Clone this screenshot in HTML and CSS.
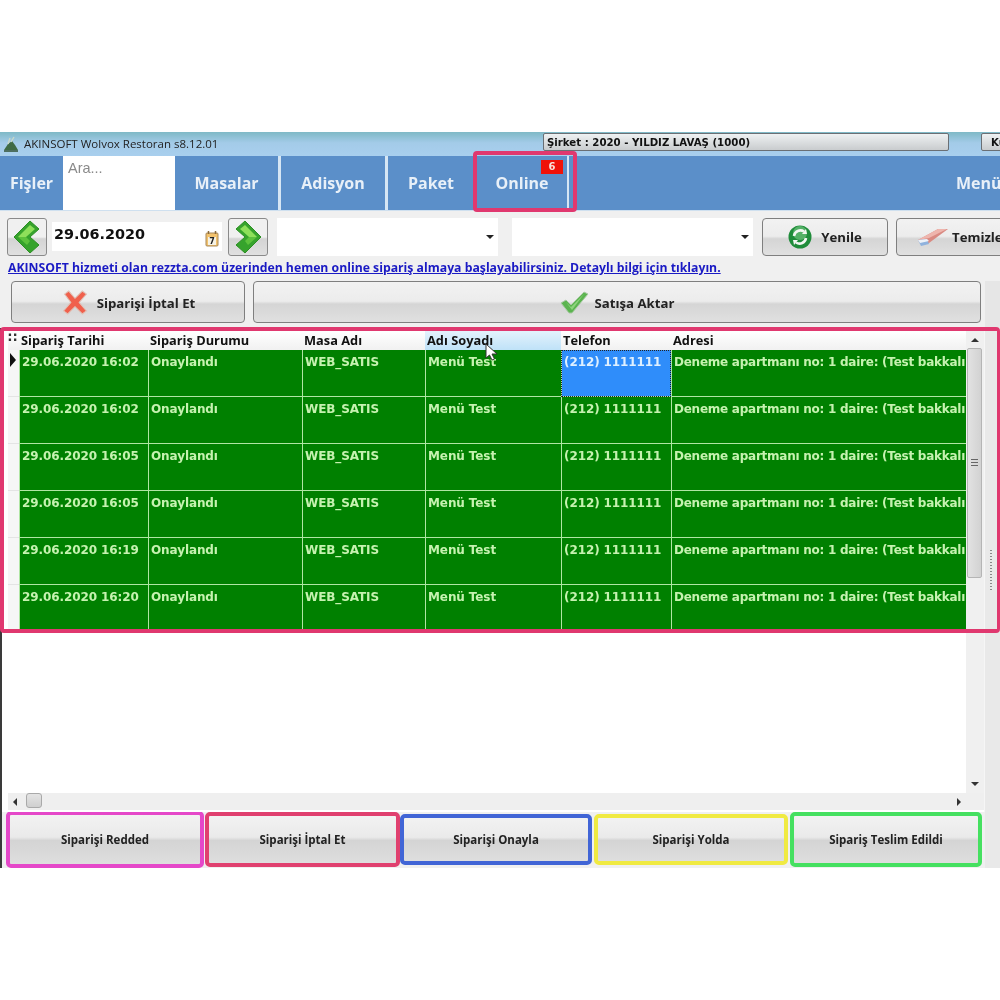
FILE: index.html
```html
<!DOCTYPE html>
<html lang="tr">
<head>
<meta charset="utf-8">
<title>AKINSOFT Wolvox Restoran</title>
<link rel="stylesheet" href="styles.css">
</head>
<body>
<div class="app">
  <header class="titlebar">
    <svg class="appicon" width="16" height="16" viewBox="0 0 16 16"><path d="M1 14 L5 8 L9 5 L12 9 L15 14 Z" fill="#3f6b45"/><path d="M5 8 L7 2 M8 6 L11 1" stroke="#c9d8c8" stroke-width="1.4"/><path d="M1 15 H15" stroke="#2f4f33" stroke-width="1.5"/></svg>
    <span class="apptitle">AKINSOFT Wolvox Restoran s8.12.01</span>
    <span class="company">Şirket : 2020 - YILDIZ LAVAŞ (1000)</span>
    <span class="user">Ku</span>
  </header>

  <nav class="tabs">
    <span class="tab t-fisler">Fişler</span>
    <span class="search">Ara...</span>
    <span class="tab t-masalar">Masalar</span>
    <span class="tab t-adisyon">Adisyon</span>
    <span class="tab t-paket">Paket</span>
    <span class="tab t-online">Online<span class="badge">6</span></span>
    <span class="tab-menu">Menü</span>
  </nav>

  <section class="toolbar">
    <button class="navbtn"><svg width="32" height="34" viewBox="0 0 32 34"><path d="M3 17 L19 1 L28 9 L19 17 L28 25 L19 33 Z" fill="#36a32c" stroke="#2c8f24" stroke-linejoin="round"/><path d="M7 17 L19 5 L24 9 L15 17 Z" fill="#8ee05a"/><path d="M7 17 L15 17 L19 21 L16 25 Z" fill="#5cc23c"/></svg></button>
    <div class="datebox"><span>29.06.2020</span>
      <svg class="cal" width="14" height="17" viewBox="0 0 14 17"><rect x="1" y="3" width="12" height="13" rx="1" fill="#f2c26d" stroke="#a9895a"/><rect x="3" y="7" width="8" height="8" fill="#f6f3e6"/><path d="M3.500 1 V4 M10.500 1 V4" stroke="#8a6b3c" stroke-width="1.500"/><text x="7" y="14" text-anchor="middle" class="caltext">7</text></svg>
    </div>
    <button class="navbtn"><svg width="32" height="34" viewBox="0 0 32 34"><path d="M29 17 L13 1 L4 9 L13 17 L4 25 L13 33 Z" fill="#36a32c" stroke="#2c8f24" stroke-linejoin="round"/><path d="M25 17 L13 5 L8 9 L17 17 Z" fill="#8ee05a"/><path d="M25 17 L17 17 L13 21 L16 25 Z" fill="#5cc23c"/></svg></button>
    <div class="combo c1"><i class="caret"></i></div>
    <div class="combo c2"><i class="caret"></i></div>
    <button class="btn b-yenile"><svg width="24" height="24" viewBox="0 0 24 24"><circle cx="12" cy="12" r="11.500" fill="#1f8c3a"/><circle cx="12" cy="8" r="7" fill="#7fcf8a" opacity=".55"/><path d="M6 11 A6.500 6.500 0 0 1 16 6.500 M18 13 A6.500 6.500 0 0 1 8 17.500" fill="none" stroke="#f2f7f2" stroke-width="2.600"/><path d="M14 9 L19 9 L18 4 Z M10 15 L5 15 L6 20 Z" fill="#f2f7f2"/></svg>Yenile</button>
    <button class="btn b-temizle"><svg width="32" height="22" viewBox="0 0 32 22"><path d="M1 14 L21 3 L31 3 L12 17 L4 18 Z" fill="#d98a82"/><path d="M1 14 L12 12 L30 3 L21 3 Z" fill="#eeb5ad"/><path d="M1 14 L10 13 L12 18 L4 20 Z" fill="#8fb2dd"/><path d="M1 14 L10 13 L12 15 L3 17 Z" fill="#eef2f8"/></svg>Temizle</button>
  </section>

  <a class="infolink" href="#">AKINSOFT hizmeti olan rezzta.com üzerinden hemen online sipariş almaya başlayabilirsiniz. Detaylı bilgi için tıklayın.</a>

  <section class="actions">
    <button class="btn a-iptal"><svg width="28" height="25" viewBox="0 0 26 24"><path d="M3 4 L7 1 L13 8 L20 1 L24 4 L17 12 L24 20 L20 23 L13 16 L6 23 L2 20 L9 12 Z" fill="#f0604c" stroke="#e0c2b8"/></svg>Siparişi İptal Et</button>
    <button class="btn a-aktar"><svg width="29" height="23" viewBox="0 0 29 23"><path d="M1 12 L6 9 L11 14 L24 1 L28 3 L12 22 L9 22 Z" fill="#5bb44f" stroke="#a9c9a4"/><path d="M6 11 L11 16 L24 3 L12 19 Z" fill="#8ed47d"/></svg>Satışa Aktar</button>
  </section>

  <section class="gridwrap">
    <div class="grid">
      <div class="ghead">
        <span class="gh-corner">∷</span><span class="gh">Sipariş Tarihi</span><span class="gh">Sipariş Durumu</span><span class="gh">Masa Adı</span><span class="gh gh-hot">Adı Soyadı</span><span class="gh">Telefon</span><span class="gh">Adresi</span>
      </div>
      <div class="grow"><span class="rh"><i class="pointer"></i></span><span class="gc">29.06.2020 16:02</span><span class="gc">Onaylandı</span><span class="gc">WEB_SATIS</span><span class="gc">Menü Test</span><span class="gc gc-sel">(212) 1111111</span><span class="gc gc-addr">Deneme apartmanı no: 1 daire: (Test bakkalı</span></div>
      <div class="grow"><span class="rh"></span><span class="gc">29.06.2020 16:02</span><span class="gc">Onaylandı</span><span class="gc">WEB_SATIS</span><span class="gc">Menü Test</span><span class="gc">(212) 1111111</span><span class="gc gc-addr">Deneme apartmanı no: 1 daire: (Test bakkalı</span></div>
      <div class="grow"><span class="rh"></span><span class="gc">29.06.2020 16:05</span><span class="gc">Onaylandı</span><span class="gc">WEB_SATIS</span><span class="gc">Menü Test</span><span class="gc">(212) 1111111</span><span class="gc gc-addr">Deneme apartmanı no: 1 daire: (Test bakkalı</span></div>
      <div class="grow"><span class="rh"></span><span class="gc">29.06.2020 16:05</span><span class="gc">Onaylandı</span><span class="gc">WEB_SATIS</span><span class="gc">Menü Test</span><span class="gc">(212) 1111111</span><span class="gc gc-addr">Deneme apartmanı no: 1 daire: (Test bakkalı</span></div>
      <div class="grow"><span class="rh"></span><span class="gc">29.06.2020 16:19</span><span class="gc">Onaylandı</span><span class="gc">WEB_SATIS</span><span class="gc">Menü Test</span><span class="gc">(212) 1111111</span><span class="gc gc-addr">Deneme apartmanı no: 1 daire: (Test bakkalı</span></div>
      <div class="grow"><span class="rh"></span><span class="gc">29.06.2020 16:20</span><span class="gc">Onaylandı</span><span class="gc">WEB_SATIS</span><span class="gc">Menü Test</span><span class="gc">(212) 1111111</span><span class="gc gc-addr">Deneme apartmanı no: 1 daire: (Test bakkalı</span></div>
      <svg class="cursor" width="14" height="18" viewBox="0 0 14 18"><path d="M1 1 V15 L4.500 12 L7 17 L9.500 16 L7 11 L12 11 Z" fill="#fff" stroke="#333"/></svg>
      <div class="vscroll">
        <i class="arr up"></i>
        <div class="thumb"></div>
        <i class="arr down"></i>
      </div>
      <div class="hscroll">
        <i class="harr left"></i>
        <div class="hthumb"></div>
        <i class="harr right"></i>
      </div>
    </div>
    <div class="sidebar"><span class="grip"></span></div>
  </section>

  <section class="orderbtns">
    <button class="obtn o-pink">Siparişi Redded</button>
    <button class="obtn o-red">Siparişi İptal Et</button>
    <button class="obtn o-blue">Siparişi Onayla</button>
    <button class="obtn o-yellow">Siparişi Yolda</button>
    <button class="obtn o-green">Sipariş Teslim Edildi</button>
    <span class="orderfill"></span>
  </section>

  <div class="mark mark-online"></div>
  <div class="mark mark-grid"></div>
</div>
</body>
</html>
```

FILE: styles.css
```css
* { box-sizing: border-box; }
html, body { margin: 0; background: #fff; }
body { padding-top: 132px; height: 1000px; overflow: hidden; font-family: "DejaVu Sans", sans-serif; }
button { font-family: inherit; padding: 0; cursor: default; }

.app { position: relative; width: 1000px; height: 736px; background: #f0f0f0; overflow: hidden; filter: blur(.35px); display: flex; flex-direction: column; }

.titlebar { height: 24px; flex: none; display: flex; align-items: center; padding-left: 3px; background: linear-gradient(#7fb9c6, #a3cbe8 45%, #a9cfee); }
.appicon { flex: none; }
.apptitle { margin: -2px 0 0 5px; width: 519px; flex: none; font: 11.5px "Open Sans", sans-serif; color: #222; white-space: nowrap; }
.company { width: 406px; height: 18px; margin-top: -5px; padding-left: 3px; flex: none; background: linear-gradient(#eef1f2, #c9ccce); border: 1px solid #6a6f74; border-radius: 2px; font: bold 10.2px/17px "DejaVu Sans", sans-serif; color: #111; white-space: nowrap; }
.user { width: 40px; height: 18px; margin: -5px 0 0 32px; padding-left: 9px; flex: none; background: linear-gradient(#eef1f2, #c9ccce); border: 1px solid #6a6f74; border-radius: 2px; font: bold 10.2px/17px "DejaVu Sans", sans-serif; color: #111; }

.tabs { height: 55px; flex: none; display: flex; background: #5b8fc9; color: #e8f0f8; font: bold 16px/55px "Open Sans", sans-serif; border-bottom: 1px solid #cfe0ef; }
.tab { position: relative; text-align: center; border-right: 3px solid #d6e6f4; white-space: nowrap; }
.t-fisler { width: 63px; border-right: 0; }
.search { width: 112px; flex: none; background: #fff; padding: 1px 0 0 5px; font: 14.5px/22px "Liberation Sans", sans-serif; color: #8a8a8a; }
.t-masalar { width: 106px; }
.t-adisyon { width: 107px; }
.t-paket { width: 89px; }
.t-online { width: 92px; border-right-width: 2px; }
.badge { position: absolute; top: 4px; right: 4px; width: 22px; height: 14px; background: #f01208; color: #f8e0d8; font: bold 10px/14px "DejaVu Sans", sans-serif; text-align: center; }
.tab-menu { margin-left: auto; width: 44px; white-space: nowrap; }

.toolbar { height: 48px; flex: none; padding: 7px 0 0 7px; display: flex; align-items: flex-start; }
.navbtn { width: 40px; height: 38px; flex: none; display: flex; align-items: center; justify-content: center; background: linear-gradient(#f0f0f0 50%, #d4d4d4 55%, #e0e0e0); border: 1px solid #8a8a8a; border-radius: 3px; }
.datebox { width: 170px; height: 29px; margin: 4px 6px 0 5px; padding: 0 3px 0 2px; flex: none; display: flex; align-items: center; justify-content: space-between; background: #fff; font: bold 14.4px "DejaVu Sans", sans-serif; color: #111; }
.datebox span { margin-top: -5px; }
.cal { margin-top: 4px; }
.caltext { font: bold 8px "DejaVu Sans", sans-serif; fill: #222; }
.combo { position: relative; height: 38px; flex: none; background: #fff; }
.c1 { width: 221px; margin-left: 9px; }
.c2 { width: 241px; margin-left: 14px; }
.caret { position: absolute; right: 4px; top: 17px; border: 4px solid transparent; border-top: 4px solid #222; border-bottom: 0; }
.btn { display: flex; align-items: center; justify-content: center; gap: 8px; background: linear-gradient(#f2f2f2, #ececec 48%, #d5d5d5 55%, #e0e0e0); border: 1px solid #7f7f7f; border-radius: 4px; font: bold 13.2px "Open Sans", sans-serif; color: #222; white-space: nowrap; flex: none; }
.b-yenile { width: 126px; height: 38px; margin-left: 9px; gap: 9px; }
.b-temizle { width: 120px; height: 38px; margin-left: 8px; justify-content: flex-start; padding-left: 20px; gap: 3px; }

.infolink { display: block; height: 22px; flex: none; padding: 1px 0 0 8px; font: bold 12.24px/15px "Open Sans", sans-serif; color: #1a1ac4; white-space: nowrap; }

.actions { height: 47px; flex: none; padding: 0 19px 0 11px; display: flex; gap: 8px; background: linear-gradient(90deg, transparent 985px, #e6e6e6 985px); }
.a-iptal { width: 234px; height: 42px; padding-top: 1px; }
.a-aktar { flex: 1; height: 42px; gap: 6px; padding-top: 1px; }

.gridwrap { height: 484px; flex: none; display: flex; border-left: 2px solid #3a3a3a; }
.grid { position: relative; width: 982px; height: 484px; padding: 3px 0 0 6px; background: #fff; }
.ghead, .grow { display: grid; grid-template-columns: 11px 129px 154px 123px 136px 110px 295px; }
.ghead { height: 19px; background: linear-gradient(#fff, #f1f1f1); font: bold 12.8px/18px "Open Sans", sans-serif; color: #111; }
.gh { padding-left: 2px; white-space: nowrap; overflow: hidden; }
.gh-corner { font: bold 13px/14px "DejaVu Sans", sans-serif; color: #333; }
.gh-hot { background: linear-gradient(#e4f2fc, #bfe2f8); }
.grow { height: 47px; font: bold 12px/24px "DejaVu Sans", sans-serif; color: #c6f2b0; }
.rh { background: #f6f6f6; position: relative; border-bottom: 1px solid #e4e4e4; }
.pointer { position: absolute; left: 2px; top: 3px; border: 7px solid transparent; border-left: 6px solid #111; border-right: 0; }
.gc { padding: 0 0 0 2px; background: #008000; border-left: 1px solid #b0e6a4; border-bottom: 1px solid #b0e6a4; white-space: nowrap; overflow: hidden; letter-spacing: -.1px; }
.gc-addr { letter-spacing: -.25px; }
.gc-sel { background: #2f8dfa; outline: 1px dotted #222; outline-offset: -1px; color: #dff0ff; }
.cursor { position: absolute; left: 483px; top: 15px; }

.vscroll { position: absolute; left: 964px; top: 3px; width: 18px; height: 462px; background: #f0f0f0; }
.arr { position: absolute; left: 5px; border: 4px solid transparent; }
.arr.up { top: 7px; border-top: 0; border-bottom: 4px solid #333; }
.arr.down { bottom: 7px; border-bottom: 0; border-top: 4px solid #333; }
.thumb { position: absolute; left: 1px; top: 17px; width: 15px; height: 230px; background: linear-gradient(90deg, #e2e2e2, #d2d2d2); border: 1px solid #b5b5b5; border-radius: 2px; }
.thumb::after { content: ""; position: absolute; left: 3px; right: 3px; top: 110px; height: 7px; background: repeating-linear-gradient(#666 0 1px, transparent 1px 3px); }
.hscroll { position: absolute; left: 6px; right: 0; top: 465px; height: 17px; background: #efefef; }
.harr { position: absolute; top: 5px; border: 4px solid transparent; }
.harr.left { left: 5px; border-left: 0; border-right: 4px solid #333; }
.harr.right { right: 23px; border-right: 0; border-left: 4px solid #333; }
.hthumb { position: absolute; left: 18px; top: 0; width: 16px; height: 15px; background: linear-gradient(#e4e4e4, #cfcfcf); border: 1px solid #a9a9a9; border-radius: 3px; }
.sidebar { position: relative; flex: 1; background: #e9e9e9; border-left: 1px solid #f6f6f6; }
.grip { position: absolute; left: 5px; top: 222px; width: 2px; height: 40px; background: repeating-linear-gradient(#888 0 1px, transparent 1px 3px); }

.orderbtns { height: 56px; flex: none; padding-left: 4px; border-left: 2px solid #3a3a3a; display: flex; align-items: flex-start; }
.obtn { flex: none; background: linear-gradient(#f2f2f2, #eaeaea 45%, #d4d4d4 52%, #dedede); border: 4px solid; border-radius: 5px; font: bold 11.5px "Open Sans", sans-serif; color: #222; white-space: nowrap; }
.o-pink { width: 198px; height: 57px; margin-top: -1px; border-color: #e548c9; }
.o-red { width: 195px; height: 55px; margin-left: 1px; border-color: #e0406f; }
.o-blue { width: 192px; height: 51px; margin-top: 2px; border-color: #4165d6; }
.o-yellow { width: 194px; height: 51px; margin: 2px 0 0 2px; border-color: #f0ea42; }
.o-green { width: 192px; height: 55px; margin-left: 2px; border-color: #45e060; }
.orderfill { flex: 1; height: 56px; background: #e9e9e9; margin-left: 3px; }

.mark { position: absolute; border: 4px solid #e0386f; border-radius: 4px; pointer-events: none; }
.mark-online { left: 473px; top: 19px; width: 104px; height: 61px; }
.mark-grid { left: 0; top: 195px; width: 1000px; height: 306px; border-right-width: 3px; }
```
